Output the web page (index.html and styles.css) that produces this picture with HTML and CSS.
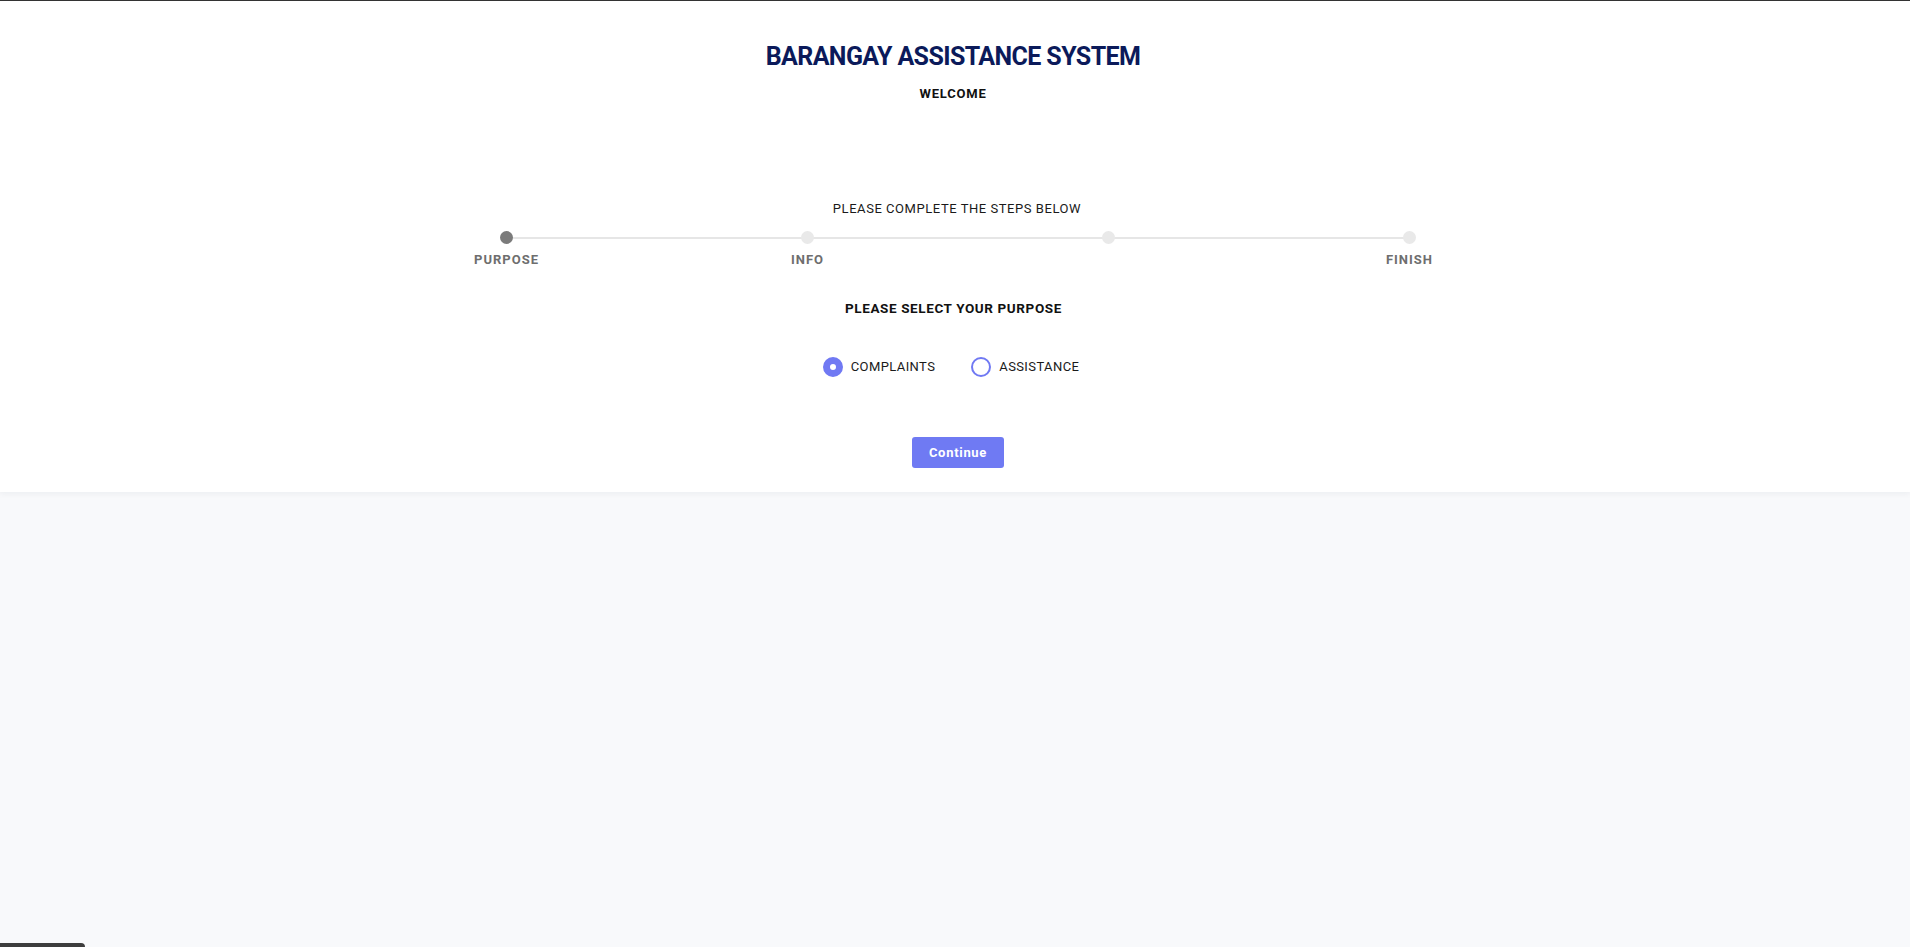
FILE: index.html
```html
<!DOCTYPE html>
<html lang="en">
<head>
<meta charset="utf-8">
<title>Barangay Assistance System</title>
<link rel="stylesheet" href="styles.css">
</head>
<body>
<main class="panel">
  <header class="head">
    <h1 class="title">BARANGAY ASSISTANCE SYSTEM</h1>
    <p class="subtitle">WELCOME</p>
  </header>
  <section class="wizard">
    <p class="instr">PLEASE COMPLETE THE STEPS BELOW</p>
    <ol class="steps">
      <li class="step active"><span class="dot"></span><span class="step-label">PURPOSE</span></li>
      <li class="step"><span class="dot"></span><span class="step-label">INFO</span></li>
      <li class="step"><span class="dot"></span><span class="step-label"></span></li>
      <li class="step"><span class="dot"></span><span class="step-label">FINISH</span></li>
    </ol>
    <h2 class="question">PLEASE SELECT YOUR PURPOSE</h2>
    <div class="options">
      <label class="opt"><span class="radio checked"></span>COMPLAINTS</label>
      <label class="opt"><span class="radio"></span>ASSISTANCE</label>
    </div>
    <button class="btn" type="button">Continue</button>
  </section>
</main>
<div class="edge-bar"></div>
</body>
</html>
```
FILE: styles.css
```css
* { box-sizing: border-box; }
html, body { height: 100%; }
body {
  margin: 0;
  background: #f8f9fb;
  border-top: 1px solid #333;
  font-family: Roboto, "Liberation Sans", sans-serif;
  color: #111;
}
.panel {
  background: #fff;
  box-shadow: 0 2px 6px rgba(20, 30, 60, 0.05);
  padding: 41px 0 24px;
  display: flex;
  flex-direction: column;
  align-items: center;
}
.head {
  text-align: center;
  margin-right: 4px;
}
.title {
  margin: 0;
  font-size: 25px;
  line-height: 30px;
  font-weight: 700;
  color: #0b1a5a;
  letter-spacing: -0.6px;
}
.subtitle {
  margin: 14px 0 0;
  font-size: 13px;
  line-height: 16px;
  font-weight: 700;
  letter-spacing: 0.8px;
  color: #111;
}
.wizard {
  margin-top: 99px;
  display: flex;
  flex-direction: column;
  align-items: center;
}
.instr {
  margin: 0;
  font-size: 13px;
  line-height: 16px;
  letter-spacing: 0.55px;
  color: #1a1a1a;
  margin-left: 4px;
}
.steps {
  list-style: none;
  margin: 14px 0 0 6px;
  padding: 0;
  width: 983px;
  display: flex;
  justify-content: space-between;
  position: relative;
}
.steps::before {
  content: "";
  position: absolute;
  left: 40px;
  right: 40px;
  top: 6px;
  height: 2px;
  background: #e6e6e6;
}
.step {
  width: 80px;
  display: flex;
  flex-direction: column;
  align-items: center;
  position: relative;
}
.dot {
  width: 13px;
  height: 13px;
  border-radius: 50%;
  background: #e9e9e9;
}
.step.active .dot { background: #7b7b7b; }
.step-label {
  margin-top: 8px;
  height: 16px;
  font-size: 13px;
  line-height: 16px;
  font-weight: 700;
  letter-spacing: 1px;
  color: #6e6e6e;
}
.question {
  margin: 32px 0 0;
  font-size: 13.5px;
  line-height: 16px;
  font-weight: 700;
  letter-spacing: 0.6px;
  color: #111;
  margin-right: 3px;
}
.options {
  margin-top: 41px;
  display: flex;
  gap: 36px;
  padding-right: 8px;
}
.opt {
  display: flex;
  align-items: center;
  gap: 8px;
  font-size: 13px;
  line-height: 20px;
  letter-spacing: 0.4px;
  color: #1a1a1a;
}
.radio {
  width: 20px;
  height: 20px;
  border-radius: 50%;
  border: 2px solid #7079f3;
  background: #fff;
}
.radio.checked {
  border: 7px solid #7079f3;
  background: #fff;
}
.btn {
  margin-top: 60px;
  margin-left: 6px;
  width: 92px;
  height: 31px;
  border: 0;
  border-radius: 3px;
  background: #6f7af3;
  color: #fff;
  font-family: Roboto, "Liberation Sans", sans-serif;
  font-size: 13px;
  font-weight: 700;
  letter-spacing: 0.7px;
}
.edge-bar {
  position: fixed;
  left: 0;
  bottom: 0;
  width: 85px;
  height: 4px;
  background: #3d3d3d;
  border-top-right-radius: 4px;
}
```
